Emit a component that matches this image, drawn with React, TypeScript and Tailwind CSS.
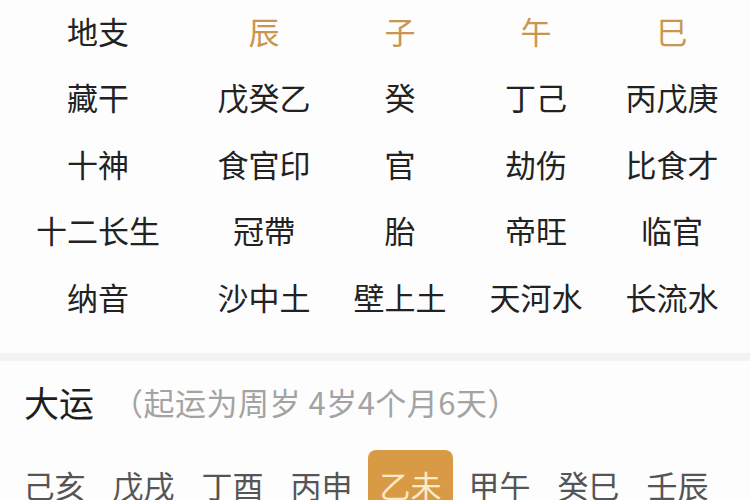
import React from "react";

const rows: { label: string; cells: string[]; gold?: boolean }[] = [
  { label: "地支", cells: ["辰", "子", "午", "巳"], gold: true },
  { label: "藏干", cells: ["戊癸乙", "癸", "丁己", "丙戊庚"] },
  { label: "十神", cells: ["食官印", "官", "劫伤", "比食才"] },
  { label: "十二长生", cells: ["冠帶", "胎", "帝旺", "临官"] },
  { label: "纳音", cells: ["沙中土", "壁上土", "天河水", "长流水"] },
];

const dayun = ["己亥", "戊戌", "丁酉", "丙申", "乙未", "甲午", "癸巳", "壬辰"];

export default function App() {
  return (
    <div
      className="w-[750px] h-[500px] overflow-hidden bg-[#fdfdfd] text-[#222]"
      style={{ fontFamily: '"Noto Sans CJK SC", "Noto Sans", sans-serif' }}
    >
      <div className="flex flex-col -mt-[3px]">
        {rows.map((r, i) => (
          <div key={i} className="grid grid-cols-[196px_repeat(4,136px)] h-[66.5px] items-center text-[31px] leading-none">
            <div className="text-center">{r.label}</div>
            {r.cells.map((c, j) => (
              <div key={j} className={"text-center " + (r.gold ? "text-[#c9964f]" : "")}>
                {c}
              </div>
            ))}
          </div>
        ))}
      </div>
      <div className="mt-[23px] h-[8px] bg-[#f3f3f5]" />
      <div className="flex items-center h-[70px] pl-[24px] pt-[12px]">
        <span className="text-[35px] leading-none text-[#1e1e1e]">大运</span>
        <span className="ml-[18px] text-[31px] leading-none text-[#a3a3a3] tracking-[0.5px]">（起运为周岁 4岁4个月6天）</span>
      </div>
      <div className="flex items-start pl-[10px] pt-[19px]">
        {dayun.map((d, i) => (
          <div key={i} className="w-[89px] flex justify-center shrink-0">
            <div
              className={
                "h-[60px] w-[85px] flex items-start justify-center pt-[19px] text-[31px] leading-none rounded-[8px] " +
                (i === 4 ? "bg-[#d99a45] text-[#fdebc8]" : "text-[#555]")
              }
            >
              {d}
            </div>
          </div>
        ))}
      </div>
    </div>
  );
}
